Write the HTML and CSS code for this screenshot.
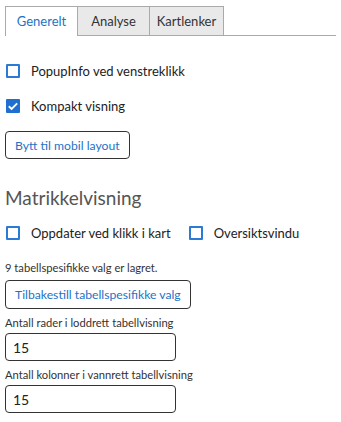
FILE: index.html
```html
<!DOCTYPE html>
<html lang="no">
<head>
  <meta charset="UTF-8">
  <meta name="viewport" content="width=device-width, initial-scale=1.0">
  <title>Innstillinger</title>
  <link rel="stylesheet" href="styles.css">
</head>
<body>
  <div class="settings">

    <!-- Tabs -->
    <div class="tabs">
      <div class="tab active">Generelt</div>
      <div class="tab">Analyse</div>
      <div class="tab">Kartlenker</div>
    </div>

    <!-- General settings -->
    <div class="section">
      <label class="check-row">
        <span class="box"></span>
        PopupInfo ved venstreklikk
      </label>
      <label class="check-row">
        <span class="box checked">
          <svg viewBox="0 0 14 14" width="14" height="14"><path d="M2.8 7.2l2.8 2.7L11.2 4.3" fill="none" stroke="#fff" stroke-width="1.9"/></svg>
        </span>
        Kompakt visning
      </label>
      <button class="btn btn-mobile">Bytt til mobil layout</button>
    </div>

    <!-- Matrikkel section -->
    <h2>Matrikkelvisning</h2>
    <div class="check-inline">
      <label class="check-row">
        <span class="box"></span>
        Oppdater ved klikk i kart
      </label>
      <label class="check-row">
        <span class="box"></span>
        Oversiktsvindu
      </label>
    </div>

    <div class="small-text">9 tabellspesifikke valg er lagret.</div>
    <button class="btn btn-reset">Tilbakestill tabellspesifikke valg</button>

    <div class="field">
      <div class="small-text">Antall rader i loddrett tabellvisning</div>
      <input type="text" value="15">
    </div>
    <div class="field">
      <div class="small-text">Antall kolonner i vannrett tabellvisning</div>
      <input type="text" value="15">
    </div>
  </div>
</body>
</html>
```

FILE: styles.css
```css
body {
  margin: 0;
  font-family: Lato, "Noto Sans", sans-serif;
  color: #222;
  background-color: #ffffff;
}
.settings {
  padding: 6px 5px 0 5px;
}
.tabs {
  display: flex;
  width: 331px;
  border-bottom: 1px solid #aaa;
}
.tab {
  width: 71px;
  height: 28px;
  line-height: 28px;
  text-align: center;
  font-size: 13px;
  color: #333;
  background-color: #e9e9e9;
  border: 1px solid #aaa;
  border-bottom: none;
  border-left: none;
  margin-bottom: -1px;
}
.tab:first-child {
  border-left: 1px solid #aaa;
}
.tab:last-child {
  width: 73px;
}
.tab.active {
  background-color: #fff;
  color: #1f72c7;
  height: 29px;
}
.section {
  padding-top: 25px;
}
.check-row {
  display: flex;
  align-items: center;
  font-size: 13px;
  color: #222;
  height: 20px;
}
.section .check-row {
  margin-bottom: 15px;
}
.box {
  box-sizing: border-box;
  width: 14px;
  height: 14px;
  margin: 0 11px 0 1px;
  border: 2px solid #2b7bd4;
  border-radius: 1px;
  display: flex;
  align-items: center;
  justify-content: center;
}
.box.checked {
  background-color: #1e6fd0;
  border-color: #1e6fd0;
}
.box svg {
  display: block;
  flex-shrink: 0;
}
.btn {
  display: block;
  font-family: inherit;
  font-size: 12.2px;
  color: #1f72c7;
  background-color: #fff;
  border: 1px solid #333;
  border-radius: 4px;
  height: 28px;
  padding: 0 9px;
  cursor: pointer;
}
.btn-mobile {
  margin-top: 14px;
}
h2 {
  font-size: 19px;
  font-weight: 400;
  color: #555;
  margin: 26px 0 0 0;
  line-height: 26px;
}
.check-inline {
  display: flex;
  gap: 17px;
  margin-top: 12px;
}
.small-text {
  font-size: 11.2px;
  color: #333;
  margin-top: 17px;
  line-height: 15px;
}
.btn-reset {
  margin-top: 5px;
  height: 29px;
}
.field .small-text {
  margin-top: 6px;
  margin-bottom: 3px;
}
.field input {
  display: block;
  box-sizing: border-box;
  width: 171px;
  height: 28px;
  padding: 0 7px;
  font-family: inherit;
  font-size: 14px;
  color: #222;
  border: 1px solid #333;
  border-radius: 4px;
}
```
